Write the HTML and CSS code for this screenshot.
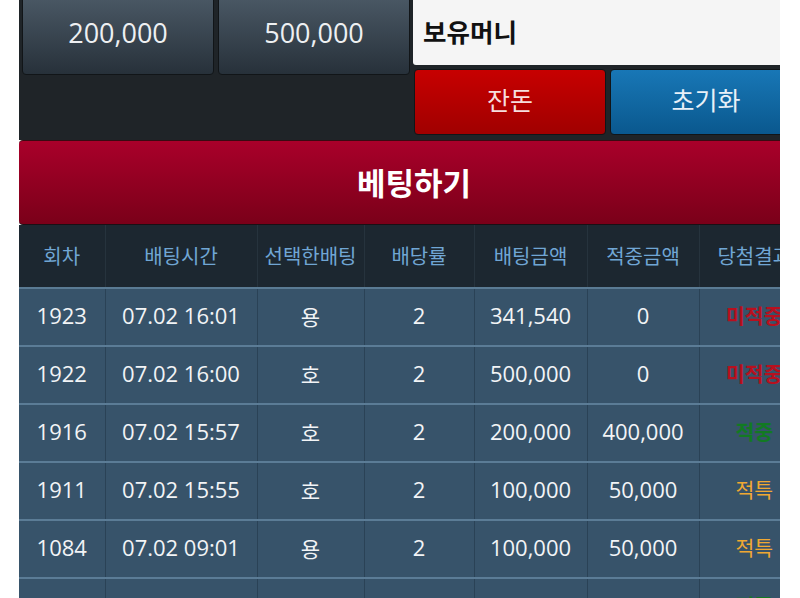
FILE: index.html
```html
<!DOCTYPE html>
<html lang="ko">
<head>
<meta charset="utf-8">
<link rel="stylesheet" href="styles.css">
</head>
<body>
<div class="clip">
  <div class="page">
    <div class="top">
      <div class="amounts">
        <div class="btn btn-dark">200,000</div>
        <div class="btn btn-dark">500,000</div>
      </div>
      <div class="side">
        <div class="money"><span class="money-label">보유머니</span><span class="money-value">0</span></div>
        <div class="side-btns">
          <div class="btn btn-red">잔돈</div>
          <div class="btn btn-blue">초기화</div>
        </div>
      </div>
    </div>
    <div class="bet">베팅하기</div>
    <table class="list">
      <colgroup>
        <col class="c1"><col class="c2"><col class="c3"><col class="c4"><col class="c5"><col class="c6"><col class="c7">
      </colgroup>
      <thead>
        <tr><th>회차</th><th>배팅시간</th><th>선택한배팅</th><th>배당률</th><th>배팅금액</th><th>적중금액</th><th>당첨결과</th></tr>
      </thead>
      <tbody>
        <tr><td>1923</td><td>07.02 16:01</td><td class="ko">용</td><td>2</td><td>341,540</td><td>0</td><td class="res lose">미적중</td></tr>
        <tr><td>1922</td><td>07.02 16:00</td><td class="ko">호</td><td>2</td><td>500,000</td><td>0</td><td class="res lose">미적중</td></tr>
        <tr><td>1916</td><td>07.02 15:57</td><td class="ko">호</td><td>2</td><td>200,000</td><td>400,000</td><td class="res win">적중</td></tr>
        <tr><td>1911</td><td>07.02 15:55</td><td class="ko">호</td><td>2</td><td>100,000</td><td>50,000</td><td class="res tie">적특</td></tr>
        <tr><td>1084</td><td>07.02 09:01</td><td class="ko">용</td><td>2</td><td>100,000</td><td>50,000</td><td class="res tie">적특</td></tr>
        <tr><td>1082</td><td>07.02 09:00</td><td class="ko">호</td><td>2</td><td>100,000</td><td>200,000</td><td class="res win">적중</td></tr>
      </tbody>
    </table>
  </div>
</div>
</body>
</html>
```

FILE: styles.css
```css
html, body {
  margin: 0;
  padding: 0;
  background: #ffffff;
  height: 598px;
  overflow: hidden;
}
body {
  font-family: "Open Sans", "Noto Sans CJK KR", sans-serif;
}
.clip {
  margin-left: 19px;
  width: 761px;
  height: 598px;
  overflow: hidden;
}
.page {
  width: 790px;
}
.top {
  background: #1f2428;
  height: 140px;
  display: flex;
  gap: 4px;
  padding: 0 0 0 3px;
  box-sizing: border-box;
  overflow: hidden;
}
.amounts {
  display: flex;
  gap: 4px;
  margin-top: -6px;
}
.btn {
  box-sizing: border-box;
  width: 192px;
  display: flex;
  align-items: center;
  justify-content: center;
  border-radius: 4px;
  border: 1px solid #111518;
}
.btn-dark {
  height: 81px;
  padding-bottom: 5px;
  background: linear-gradient(#4b5966, #27313a);
  color: #eef0f2;
  font-size: 27px;
}
.side {
  display: flex;
  flex-direction: column;
  gap: 4px;
  margin-left: -1px;
}
.money {
  box-sizing: border-box;
  width: 390px;
  height: 65px;
  background: #f5f5f5;
  border-radius: 0 0 3px 3px;
  display: flex;
  align-items: center;
  justify-content: space-between;
  padding: 0 8px 4px 10px;
  font-family: "Noto Sans CJK KR", sans-serif;
  color: #111;
}
.money-label {
  font-size: 25.5px;
  font-weight: bold;
}
.money-value {
  font-family: "Open Sans", sans-serif;
  font-size: 23px;
  font-weight: bold;
}
.side-btns {
  display: flex;
  gap: 4px;
  margin-left: 1px;
}
.btn-red, .btn-blue {
  height: 66px;
  font-family: "Noto Sans CJK KR", sans-serif;
  font-size: 25px;
  padding-bottom: 6px;
}
.btn-red {
  background: linear-gradient(#c70000, #a00000);
  color: #f6dede;
}
.btn-blue {
  background: linear-gradient(#1877b6, #0a588e);
  color: #e8f0f8;
}
.bet {
  border-top: 1px solid #3a0a12;
  border-radius: 4px 0 0 4px;
  background: linear-gradient(#a9002a, #7a0019);
  color: #ffffff;
  font-family: "Noto Sans CJK KR", sans-serif;
  font-weight: bold;
  font-size: 31px;
  display: flex;
  align-items: center;
  justify-content: center;
  padding-bottom: 3px;
  box-sizing: border-box;
  height: 85px;
  border-bottom: 1px solid #1a1015;
}
.list {
  width: 790px;
  border-collapse: collapse;
  table-layout: fixed;
}
.c1 { width: 86px; }
.c2 { width: 152px; }
.c3 { width: 107px; }
.c4 { width: 110px; }
.c5 { width: 113px; }
.c6 { width: 112px; }
.c7 { width: 110px; }
.list th {
  height: 60px;
  background: #1c2730;
  color: #70a6d4;
  font-family: "Noto Sans CJK KR", sans-serif;
  font-weight: normal;
  font-size: 20px;
  border-left: 1px solid #26333d;
  border-bottom: 2px solid #5a7b94;
  padding: 0 0 2px 0;
  white-space: nowrap;
}
.list td {
  height: 51px;
  background: #37536a;
  color: #f2f4f6;
  font-size: 22px;
  text-align: center;
  border-left: 1px solid #2a4256;
  border-bottom: 2px solid #5b7c96;
  padding: 0 0 5px 0;
  white-space: nowrap;
}
.list th:first-child, .list td:first-child {
  border-left: none;
}
.list td.ko {
  font-family: "Noto Sans CJK KR", sans-serif;
  font-size: 21px;
  padding-bottom: 2px;
}
.list td.res {
  font-family: "Noto Sans CJK KR", sans-serif;
  font-size: 20.5px;
  padding-bottom: 4px;
}
.lose {
  color: #b8101e !important;
  font-weight: bold;
}
.win {
  color: #127a22 !important;
  font-weight: bold;
}
.tie {
  color: #f0a832 !important;
}
```
